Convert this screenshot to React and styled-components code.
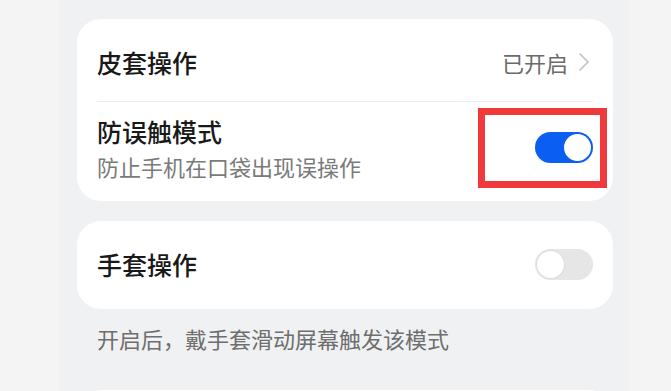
import styled, { createGlobalStyle } from "styled-components";

const GlobalStyle = createGlobalStyle`
  html, body {
    margin: 0;
    padding: 0;
    background: #f4f4f5;
    overflow: hidden;
  }
  body {
    font-family: "Noto Sans CJK SC", "Noto Sans", sans-serif;
  }
`;

const Page = styled.div`
  width: 671px;
  height: 391px;
  display: flex;
  overflow: hidden;
`;

const Panel = styled.div`
  margin-left: 58px;
  width: 572px;
  background: #f0f1f3;
  padding: 19px 17px 0 19px;
  box-sizing: border-box;
  display: flex;
  flex-direction: column;
`;

const Card = styled.div`
  background: #ffffff;
  border-radius: 24px;
  display: flex;
  flex-direction: column;
  flex-shrink: 0;
`;

const Row = styled.div`
  display: flex;
  align-items: center;
  justify-content: space-between;
  height: ${(p) => p.$height}px;
  padding: ${(p) => p.$pt || 0}px 20px ${(p) => p.$pb || 0}px;
  box-sizing: border-box;
`;

const Divider = styled.div`
  height: 1px;
  background: #ededed;
  margin: 0 20px;
`;

const TextBlock = styled.div`
  display: flex;
  flex-direction: column;
  margin-bottom: 7px;
`;

const Title = styled.span`
  font-size: 25px;
  line-height: 36px;
  color: #191919;
  font-weight: 500;
`;

const Sub = styled.span`
  font-size: 22px;
  line-height: 34px;
  color: #7a7a7a;
`;

const Value = styled.div`
  display: flex;
  align-items: center;
  gap: 10px;
  font-size: 22px;
  color: #6b6b6b;
  margin-right: 3px;
`;

const Highlight = styled.div`
  width: 129px;
  height: 80px;
  box-sizing: border-box;
  border: 7px solid #f0393b;
  margin-right: -14px;
  margin-bottom: 8px;
  display: flex;
  align-items: center;
  justify-content: flex-end;
  padding-right: 7px;
`;

const Track = styled.div`
  width: 58px;
  height: 31px;
  border-radius: 16px;
  background: ${(p) => (p.$on ? "#0b5ef2" : "#e6e6e6")};
  position: relative;
  flex-shrink: 0;
`;

const Knob = styled.div`
  position: absolute;
  top: 2px;
  left: ${(p) => (p.$on ? "29px" : "2px")};
  width: 27px;
  height: 27px;
  border-radius: 50%;
  background: #ffffff;
  box-shadow: ${(p) => (p.$on ? "none" : "0 0 0 1px #dcdcdc")};
`;

const Note = styled.div`
  font-size: 22px;
  line-height: 34px;
  color: #6e6e6e;
  padding-left: 20px;
  margin-top: 12px;
`;

const Gap = styled.div`
  height: ${(p) => p.$h}px;
  flex-shrink: 0;
`;

const NextCard = styled(Card)`
  margin-top: 35px;
  height: 80px;
`;

function Toggle({ on }) {
  return (
    <Track $on={on}>
      <Knob $on={on} />
    </Track>
  );
}

function Chevron() {
  return (
    <svg width="12" height="20" viewBox="0 0 12 20">
      <polyline
        points="2,2 10,10 2,18"
        fill="none"
        stroke="#c2c2c2"
        strokeWidth="1.7"
        strokeLinecap="round"
        strokeLinejoin="round"
      />
    </svg>
  );
}

export default function App() {
  return (
    <Page>
      <GlobalStyle />
      <Panel>
        <Card>
          <Row $height={82} $pt={3}>
            <Title>皮套操作</Title>
            <Value>
              已开启
              <Chevron />
            </Value>
          </Row>
          <Divider />
          <Row $height={99}>
            <TextBlock>
              <Title>防误触模式</Title>
              <Sub>防止手机在口袋出现误操作</Sub>
            </TextBlock>
            <Highlight>
              <Toggle on />
            </Highlight>
          </Row>
        </Card>
        <Gap $h={20} />
        <Card>
          <Row $height={88} $pb={2}>
            <Title>手套操作</Title>
            <Toggle on={false} />
          </Row>
        </Card>
        <Note>开启后，戴手套滑动屏幕触发该模式</Note>
        <NextCard />
      </Panel>
    </Page>
  );
}
